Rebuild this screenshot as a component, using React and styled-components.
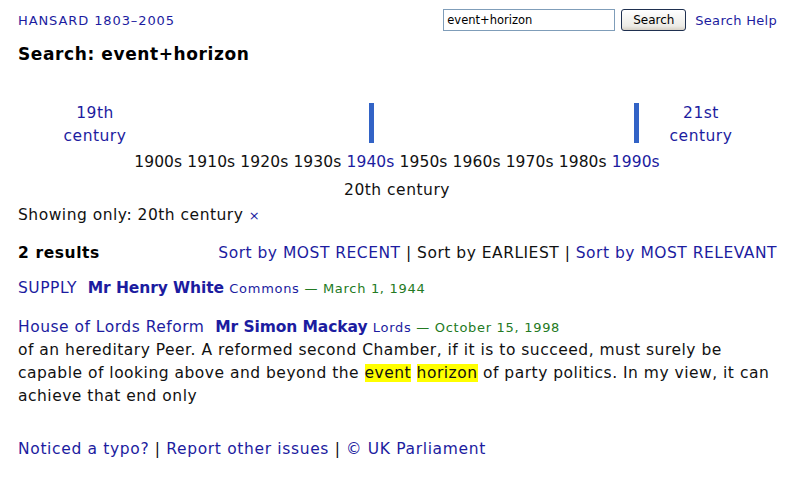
import React from 'react';
import styled, { createGlobalStyle } from 'styled-components';

const GlobalStyle = createGlobalStyle`
  body {
    margin: 0;
    background: #ffffff;
    font-family: "DejaVu Sans", Verdana, sans-serif;
    color: #111111;
  }
`;

const Page = styled.div`
  width: 794px;
  height: 480px;
  padding: 0 18px;
  box-sizing: border-box;
  overflow: hidden;
  font-size: 15.5px;
  line-height: 23px;
  letter-spacing: 0.5px;
`;

const TopBar = styled.div`
  display: flex;
  justify-content: space-between;
  align-items: center;
  padding-top: 9px;
  height: 22px;
  line-height: normal;
`;

const Link = styled.a`
  color: #1c1ca0;
  text-decoration: none;
  font-weight: ${(p) => (p.$bold ? 'bold' : 'normal')};
  cursor: pointer;
`;

const Brand = styled(Link)`
  font-size: 13px;
  letter-spacing: 0.9px;
`;

const SearchForm = styled.form`
  display: flex;
  align-items: center;
  margin-right: -1px;
`;

const SearchInput = styled.input`
  width: 172px;
  height: 22px;
  box-sizing: border-box;
  border: 1px solid #7f9db9;
  padding: 2px 3px;
  font-family: "DejaVu Sans", Tahoma, sans-serif;
  font-size: 11.5px;
  letter-spacing: 0;
  color: #000;
  outline: none;
`;

const SearchButton = styled.button`
  margin-left: 6px;
  width: 65px;
  height: 22px;
  border: 1px solid #1f3050;
  border-radius: 3px;
  background: linear-gradient(#ffffff, #ecebe6 80%, #d6d0c5);
  font-family: "DejaVu Sans", Tahoma, sans-serif;
  font-size: 12px;
  color: #000;
  padding: 0;
`;

const HelpLink = styled(Link)`
  margin-left: 9px;
  font-size: 13px;
  letter-spacing: 0.3px;
`;

const Heading = styled.h1`
  margin: 13px 0 0;
  font-size: 17px;
  line-height: 20px;
  letter-spacing: 0.6px;
  font-weight: bold;
  color: #000;
`;

const Timeline = styled.div`
  margin-top: 38px;
`;

const CenturyRow = styled.div`
  position: relative;
  display: flex;
  justify-content: space-between;
  height: 46px;
`;

const CenturyLabel = styled(Link)`
  width: ${(p) => p.$width}px;
  text-align: center;
  display: block;
`;

const Bar = styled.span`
  position: absolute;
  top: 1px;
  width: 5px;
  height: 40px;
  background: #3263c6;
`;

const DecadeRow = styled.div`
  text-align: center;
  margin-top: 3px;
  letter-spacing: 0.1px;
`;

const Decade = styled.span`
  color: ${(p) => (p.$active ? '#1c1ca0' : '#111')};
`;

const CenturyName = styled.div`
  text-align: center;
  margin-top: 5px;
`;

const Filter = styled.div`
  margin-top: 2px;
`;

const Close = styled(Link)`
  font-size: 13px;
`;

const ResultsHeader = styled.div`
  display: flex;
  justify-content: space-between;
  align-items: center;
  margin-top: 15px;
`;

const Count = styled.div`
  font-weight: bold;
  letter-spacing: 0.6px;
  color: #000;
`;

const Sorts = styled.div`
  margin-right: -1px;
`;

const Result = styled.div`
  margin-top: ${(p) => p.$gap}px;
`;

const Speaker = styled(Link)`
  font-weight: bold;
  letter-spacing: -0.1px;
`;

const Meta = styled.span`
  font-size: 13px;
  letter-spacing: 0.7px;
  color: #1c1ca0;
`;

const DateText = styled.span`
  color: #237a23;
`;

const Excerpt = styled.p`
  margin: 0;
  color: #111;
`;

const Mark = styled.span`
  background: #ffff00;
`;

const Footer = styled.div`
  margin-top: 30px;
  letter-spacing: 0.65px;
`;

const decades = ['1900s', '1910s', '1920s', '1930s', '1940s', '1950s', '1960s', '1970s', '1980s', '1990s'];
const active = ['1940s', '1990s'];

export default function App() {
  return (
    <Page>
      <GlobalStyle />
      <TopBar>
        <Brand>HANSARD 1803–2005</Brand>
        <SearchForm onSubmit={(e) => e.preventDefault()}>
          <SearchInput defaultValue="event+horizon" />
          <SearchButton>Search</SearchButton>
          <HelpLink>Search Help</HelpLink>
        </SearchForm>
      </TopBar>

      <Heading>Search: event+horizon</Heading>

      <Timeline>
        <CenturyRow>
          <CenturyLabel $width={154}>19th<br />century</CenturyLabel>
          <Bar style={{ left: 351 }} />
          <Bar style={{ left: 616 }} />
          <CenturyLabel $width={150}>21st<br />century</CenturyLabel>
        </CenturyRow>
        <DecadeRow>
          {decades.map((d, i) => (
            <React.Fragment key={d}>
              {i > 0 && ' '}
              <Decade $active={active.includes(d)}>{d}</Decade>
            </React.Fragment>
          ))}
        </DecadeRow>
        <CenturyName>20th century</CenturyName>
      </Timeline>

      <Filter>
        Showing only: 20th century <Close>×</Close>
      </Filter>

      <ResultsHeader>
        <Count>2 results</Count>
        <Sorts>
          <Link>Sort by MOST RECENT</Link> | Sort by EARLIEST | <Link>Sort by MOST RELEVANT</Link>
        </Sorts>
      </ResultsHeader>

      <Result $gap={12}>
        <Link>SUPPLY</Link>{'\u00a0 '}
        <Speaker>Mr Henry White</Speaker>{' '}
        <Meta>Commons <DateText>— March 1, 1944</DateText></Meta>
      </Result>

      <Result $gap={16}>
        <Link>House of Lords Reform</Link>{'\u00a0 '}
        <Speaker>Mr Simon Mackay</Speaker>{' '}
        <Meta>Lords <DateText>— October 15, 1998</DateText></Meta>
        <Excerpt>
          of an hereditary Peer. A reformed second Chamber, if it is to succeed, must surely be
          capable of looking above and beyond the <Mark>event</Mark> <Mark>horizon</Mark> of party
          politics. In my view, it can achieve that end only
        </Excerpt>
      </Result>

      <Footer>
        <Link>Noticed a typo?</Link> | <Link>Report other issues</Link> | <Link>© UK Parliament</Link>
      </Footer>
    </Page>
  );
}
